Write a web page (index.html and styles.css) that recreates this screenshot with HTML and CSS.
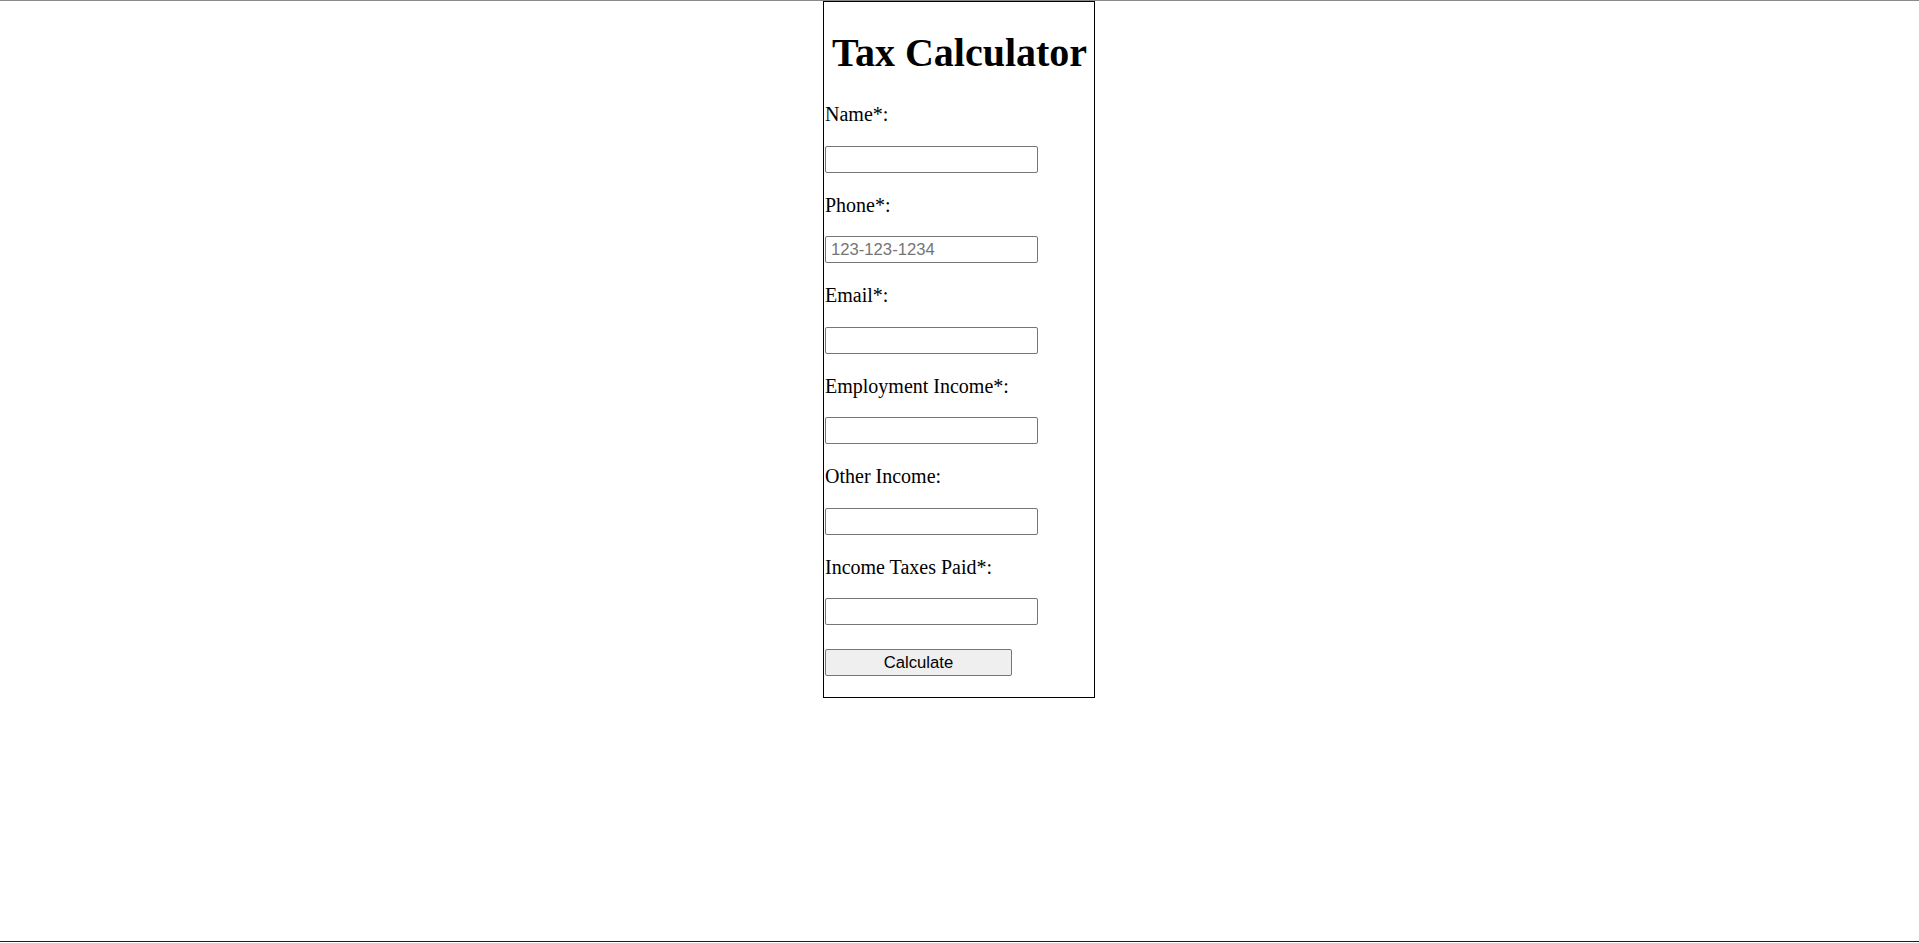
FILE: index.html
```html
<!DOCTYPE html>
<html>
    <head>
        <title>Tax Calculator</title>
        <link rel="stylesheet" href="styles.css">
    </head>
    <body>
        <form id="taxForm" class="tax-form" method="post" action="#">
        <h1>Tax Calculator</h1>

        <p class="label-row"><label for="name">Name*:</label></p>
        <p class="input-row"><input type="text" name="name" id="name" required /></p>

        <p class="label-row"><label for="phone">Phone*:</label></p>
        <p class="input-row"><input type="text" name="phone" id="phone" placeholder="123-123-1234" required /></p>

        <p class="label-row"><label for="email">Email*:</label></p>
        <p class="input-row"><input type="email" name="email" id="email" required /></p>

        <p class="label-row"><label for="employment">Employment Income*:</label></p>
        <p class="input-row"><input type="text" name="employment" id="employment" required /></p>

        <p class="label-row"><label for="other">Other Income:</label></p>
        <p class="input-row"><input type="text" name="other" id="other" /></p>

        <p class="label-row"><label for="taxes">Income Taxes Paid*:</label></p>
        <p class="input-row"><input type="text" name="taxes" id="taxes" required /></p>

        <p class="btn-row"><input type="submit" class="calc-btn" value="Calculate" /></p>
        </form>
    </body>
</html>
```

FILE: styles.css
```css
html{
    border-top: 1px solid #8a8a8a;
}

body{
    margin: 0;
    min-height: 941px;
    border-bottom: 1px solid #1e1e1e;
    box-sizing: border-box;
    font-family: "Liberation Serif", "Times New Roman", serif;
    font-size: 20px;
    color: black;
    background-color: white;
}

.tax-form{
    margin-left: calc(50% - 136.5px);
    width: 269px;
    padding: 0 0 0 1px;
    border: 1px solid black;
}

h1{
    text-align: center;
    font-size: 40px;
    line-height: 46px;
    margin: 28px 0 26px;
}

p{
    margin: 20px 0;
}

.label-row{
    line-height: 21.5px;
    padding-top: 2px;
}

.input-row{
    height: 27px;
}

input[type="text"],
input[type="email"]{
    display: block;
    font-family: "Liberation Sans", Arial, sans-serif;
    font-size: 16.67px;
    width: 213px;
    height: 27px;
    box-sizing: border-box;
    margin: 0;
    padding: 1px 5px;
    border: 1px solid #767676;
    border-radius: 2px;
}

input::placeholder{
    color: #757575;
}

.btn-row{
    margin-top: 24px;
    margin-bottom: 21px;
    height: 27px;
}

.calc-btn{
    display: block;
    font-family: "Liberation Sans", Arial, sans-serif;
    font-size: 16.67px;
    width: 187px;
    height: 27px;
    box-sizing: border-box;
    margin: 0;
    padding: 0;
    background-color: #efefef;
    border: 1px solid #767676;
    border-radius: 2px;
    color: black;
}
```
